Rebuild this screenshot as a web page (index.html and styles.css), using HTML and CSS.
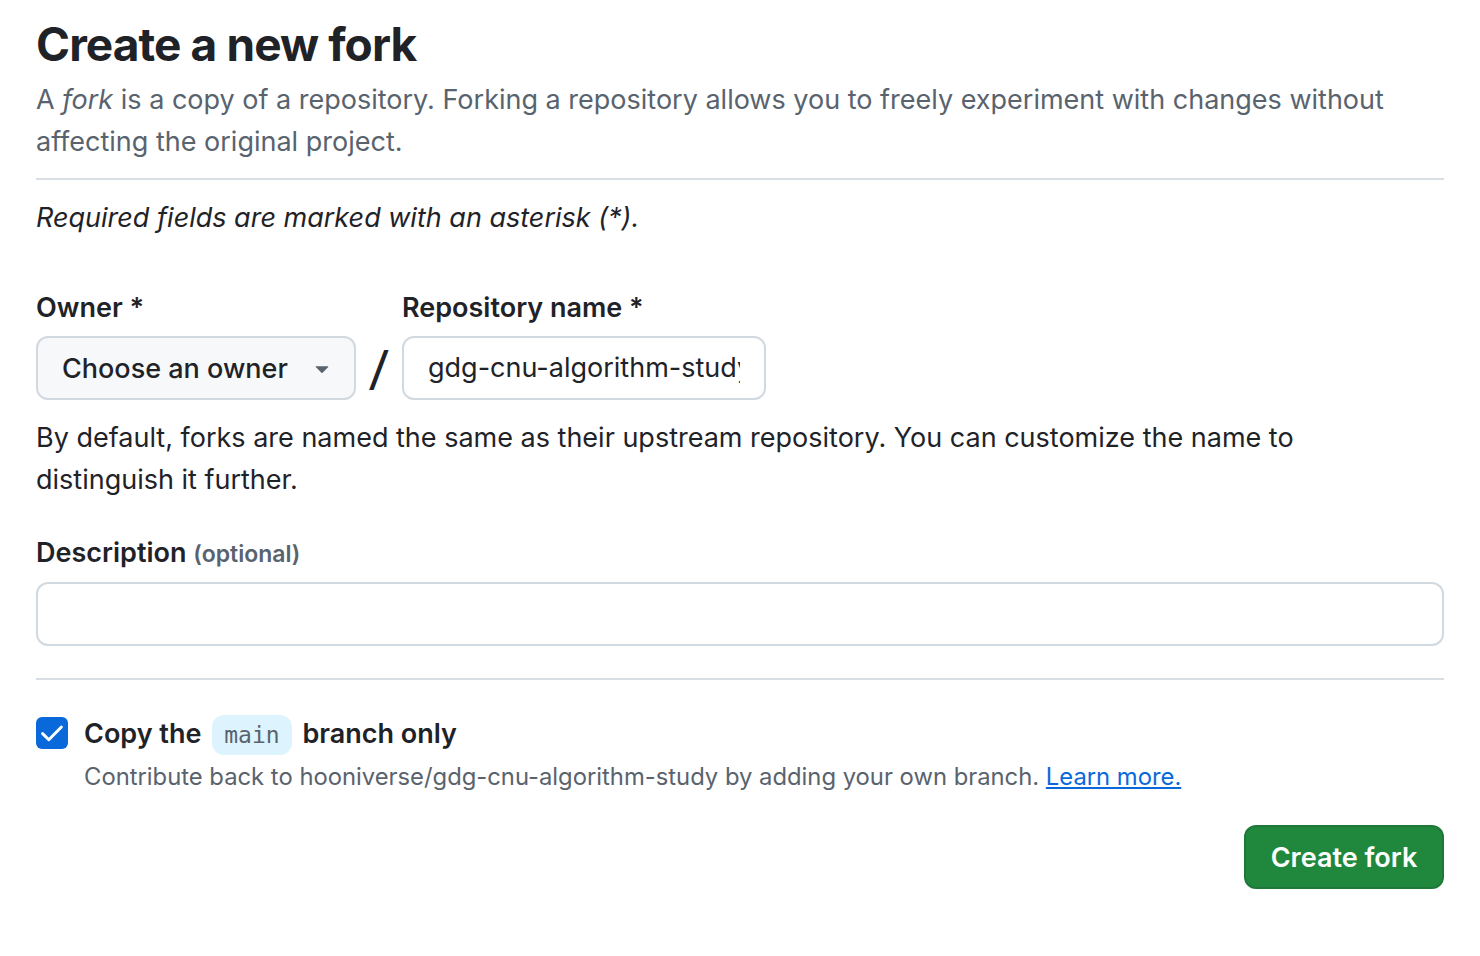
FILE: index.html
```html
<!DOCTYPE html>
<html lang="en">
<head>
<meta charset="utf-8">
<title>Create a new fork</title>
<link rel="stylesheet" href="styles.css">
</head>
<body>
<main class="page">
  <header class="subhead">
    <h1 class="title">Create a new fork</h1>
    <p class="lead">A <em>fork</em> is a copy of a repository. Forking a repository allows you to freely experiment with changes without affecting the original project.</p>
  </header>
  <p class="required">Required fields are marked with an asterisk (*).</p>

  <div class="owner-row">
    <div class="field">
      <label class="label">Owner *</label>
      <button class="owner-btn" type="button">
        <span>Choose an owner</span>
        <svg class="caret" width="16" height="16" viewBox="0 0 16 16"><path d="M4.427 7.427l3.396 3.396a.25.25 0 00.354 0l3.396-3.396A.25.25 0 0011.396 7H4.604a.25.25 0 00-.177.427z" fill="#59636e"/></svg>
      </button>
    </div>
    <span class="slash">/</span>
    <div class="field">
      <label class="label">Repository name *</label>
      <div class="repo-input"><span>gdg-cnu-algorithm-study</span></div>
    </div>
  </div>
  <p class="helper">By default, forks are named the same as their upstream repository. You can customize the name to distinguish it further.</p>

  <div class="desc-field">
    <label class="label">Description <span class="optional">(optional)</span></label>
    <div class="desc-input"></div>
  </div>

  <hr class="divider">

  <div class="check-row">
    <span class="checkbox">
      <svg width="32" height="32" viewBox="0 0 16 16"><path d="M3.3 8.3l3.1 3.1L12.7 5" fill="none" stroke="#fff" stroke-width="1.45" stroke-linecap="round" stroke-linejoin="round"/></svg>
    </span>
    <div class="check-text">
      <div class="check-label">Copy the <code class="branch">main</code> branch only</div>
      <div class="check-note">Contribute back to hooniverse/gdg-cnu-algorithm-study by adding your own branch. <a href="#" class="link">Learn more.</a></div>
    </div>
  </div>

  <div class="actions">
    <button class="primary" type="button">Create fork</button>
  </div>
</main>
</body>
</html>
```

FILE: styles.css
```css
* { box-sizing: border-box; }
html, body { margin: 0; padding: 0; background: #ffffff; }
body {
  font-family: Inter, "Noto Sans", "Liberation Sans", sans-serif;
  color: #1f2328;
  font-size: 28px;
  line-height: 42px;
}
.page {
  padding: 14px 36px 0 36px;
  display: flex;
  flex-direction: column;
}
.subhead {
  border-bottom: 2px solid #d8dee4;
  padding-bottom: 15px;
}
.title {
  margin: 0;
  font-size: 46px;
  font-weight: 700;
  line-height: 60px;
  letter-spacing: -0.9px;
}
.lead {
  margin: 5px 0 0 0;
  color: #59636e;
  font-size: 27px;
  line-height: 42px;
}
.lead em { font-style: italic; }
.required {
  margin: 17px 0 0 0;
  font-style: italic;
  font-size: 27px;
}
.owner-row {
  margin-top: 48px;
  display: flex;
  align-items: flex-end;
}
.field { display: flex; flex-direction: column; }
.label {
  font-weight: 600;
  font-size: 27px;
  line-height: 42px;
  margin-bottom: 7px;
}
.owner-btn {
  width: 320px;
  height: 64px;
  background: #f6f8fa;
  border: 2px solid #d1d9e0;
  border-radius: 12px;
  display: flex;
  align-items: center;
  justify-content: space-between;
  padding: 0 18px 0 24px;
  font-family: inherit;
  font-size: 27px;
  font-weight: 500;
  color: #1f2328;
}
.caret { width: 28px; height: 28px; }
.slash {
  font-size: 46px;
  line-height: 64px;
  width: 46px;
  text-align: center;
  font-weight: 500;
  color: #1f2328;
  transform: skewX(-6deg);
}
.repo-input {
  width: 364px;
  height: 64px;
  border: 2px solid #d1d9e0;
  border-radius: 12px;
  padding: 0 24px;
  display: flex;
  align-items: center;
  overflow: hidden;
  white-space: nowrap;
  font-size: 27px;
}
.repo-input span { overflow: hidden; }
.helper {
  margin: 17px 0 0 0;
  font-size: 27px;
  max-width: 1360px;
}
.desc-field {
  margin-top: 31px;
  display: flex;
  flex-direction: column;
}
.optional {
  color: #59636e;
  font-size: 23px;
}
.desc-input {
  height: 64px;
  border: 2px solid #d1d9e0;
  border-radius: 12px;
}
.divider {
  border: 0;
  border-top: 2px solid #d8dee4;
  margin: 32px 0 0 0;
  width: 100%;
}
.check-row {
  margin-top: 32px;
  display: flex;
  gap: 16px;
  align-items: flex-start;
}
.checkbox {
  width: 32px;
  height: 32px;
  border-radius: 6px;
  background: #0969da;
  display: flex;
  align-items: center;
  justify-content: center;
  margin-top: 5px;
  flex-shrink: 0;
}
.check-label {
  font-weight: 600;
  font-size: 27px;
  line-height: 44px;
}
.branch {
  font-family: "DejaVu Sans Mono", "Liberation Mono", monospace;
  font-weight: 400;
  font-size: 23px;
  color: #59636e;
  background: #ddf4ff;
  border-radius: 12px;
  padding: 7px 12px;
  margin: 0 4px;
}
.check-note {
  color: #59636e;
  font-size: 23.8px;
  line-height: 40px;
}
.link { color: #0969da; text-decoration: underline; }
.actions {
  margin-top: 28px;
  display: flex;
  justify-content: flex-end;
}
.primary {
  height: 64px;
  width: 200px;
  padding: 0;
  background: #1f883d;
  color: #ffffff;
  border: 2px solid rgba(31,35,40,0.15);
  border-radius: 12px;
  font-family: inherit;
  font-size: 27px;
  font-weight: 600;
}
```
